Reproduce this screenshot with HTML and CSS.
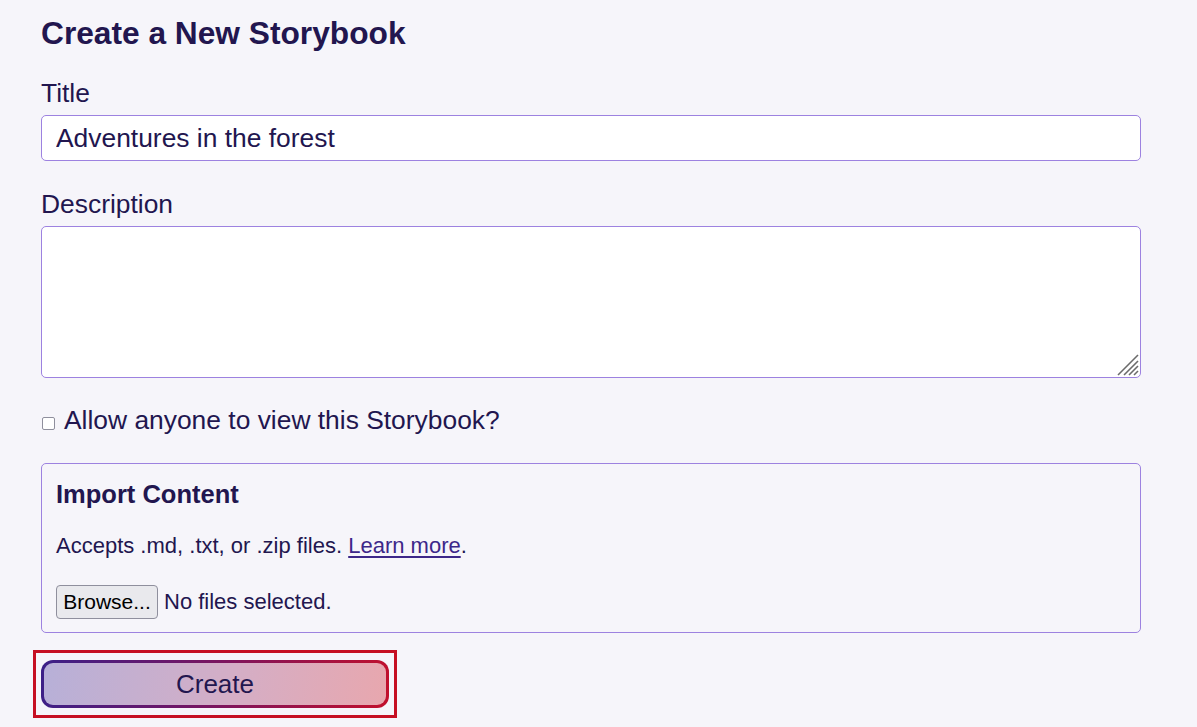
FILE: index.html
```html
<!DOCTYPE html>
<html lang="en">
<head>
<meta charset="utf-8">
<title>Create a New Storybook</title>
<link rel="stylesheet" href="styles.css">
</head>
<body>
<main class="page">
  <h2 class="page-title">Create a New Storybook</h2>
  <form class="form">
    <label class="field-label" for="title">Title</label>
    <input class="text-input" id="title" type="text" value="Adventures in the forest">

    <label class="field-label" for="desc">Description</label>
    <div class="area-wrap">
      <textarea class="text-area" id="desc"></textarea>
      <svg class="grip" width="22" height="22" viewBox="0 0 22 22" aria-hidden="true">
        <g stroke="#6b6b6b" stroke-width="1.6" stroke-linecap="butt">
          <line x1="1" y1="21" x2="21" y2="1"/>
          <line x1="7" y1="21" x2="21" y2="7"/>
          <line x1="12" y1="21" x2="21" y2="12"/>
          <line x1="17" y1="21" x2="21" y2="17"/>
        </g>
      </svg>
    </div>

    <label class="check-row"><input class="check" type="checkbox"><span>Allow anyone to view this Storybook?</span></label>

    <fieldset class="import">
      <h3 class="import-title">Import Content</h3>
      <p class="import-note">Accepts .md, .txt, or .zip files. <a class="link" href="#">Learn more</a>.</p>
      <div class="file-row">
        <button class="browse-btn" type="button">Browse...</button>
        <span class="file-status">No files selected.</span>
      </div>
    </fieldset>

    <div class="actions">
      <div class="focus-ring">
        <button class="create-btn" type="submit">Create</button>
      </div>
    </div>
  </form>
</main>
</body>
</html>
```

FILE: styles.css
```css
html, body {
  margin: 0;
  padding: 0;
  background: #f6f5fa;
}

body {
  font-family: "Liberation Sans", Arial, sans-serif;
  color: #22164f;
}

.page {
  width: 1100px;
  padding: 15px 0 0 41px;
}

.page-title {
  margin: 0 0 26px;
  font-size: 31.7px;
  font-weight: 700;
  line-height: normal;
}

.form {
  display: flex;
  flex-direction: column;
  align-items: stretch;
}

.field-label {
  font-size: 26.4px;
  line-height: normal;
  margin-bottom: 6px;
}

.text-input {
  box-sizing: border-box;
  height: 46px;
  margin: 0 0 28px;
  padding: 0 14px;
  border: 1px solid #9d82e0;
  border-radius: 5px;
  background: #ffffff;
  font-family: inherit;
  font-size: 26.4px;
  color: #22164f;
  outline: none;
}

.area-wrap {
  position: relative;
  margin: 0 0 27px;
}

.text-area {
  display: block;
  box-sizing: border-box;
  width: 100%;
  height: 152px;
  margin: 0;
  padding: 8px 14px;
  border: 1px solid #9d82e0;
  border-radius: 5px;
  background: #ffffff;
  font-family: inherit;
  font-size: 26.4px;
  color: #22164f;
  resize: none;
  outline: none;
}

.grip {
  position: absolute;
  right: 2px;
  bottom: 2px;
  pointer-events: none;
}

.check-row {
  display: flex;
  align-items: center;
  gap: 9px;
  font-size: 26.4px;
  line-height: normal;
  margin-bottom: 27px;
}

.check {
  appearance: none;
  -webkit-appearance: none;
  box-sizing: border-box;
  width: 13px;
  height: 13px;
  margin: 6px 0 0 1px;
  border: 1px solid #8f8f9d;
  border-radius: 2px;
  background: #ffffff;
  flex: none;
}

.import {
  margin: 0 0 17px;
  padding: 16px 14px 13px;
  border: 1px solid #9d82e0;
  border-radius: 5px;
  min-width: 0;
}

.import-title {
  margin: 0 0 24px;
  font-size: 25.5px;
  font-weight: 700;
  line-height: normal;
}

.import-note {
  margin: 0 0 26px;
  font-size: 22px;
  line-height: normal;
}

.link {
  color: #3d2789;
  text-decoration: underline;
  text-underline-offset: 3px;
}

.file-row {
  display: flex;
  align-items: center;
  gap: 6px;
}

.browse-btn {
  box-sizing: border-box;
  height: 34px;
  width: 102px;
  padding: 0;
  border: 1px solid #8f8f9d;
  border-radius: 4px;
  background: #e9e9ed;
  font-family: inherit;
  font-size: 21px;
  color: #000000;
}

.file-status {
  font-size: 22px;
}

.actions {
  display: flex;
  margin-left: -8px;
}

.focus-ring {
  display: flex;
  padding: 7px 5px 7px;
  border: 3px solid #c60f23;
}

.create-btn {
  box-sizing: border-box;
  width: 348px;
  height: 48px;
  border: 3px solid transparent;
  border-radius: 12px;
  background:
    linear-gradient(100deg, #b7b0d8 0%, #d4aec6 55%, #e8a7ae 100%) padding-box,
    linear-gradient(100deg, #3b2088 0%, #7a1560 50%, #c2102c 100%) border-box;
  font-family: inherit;
  font-size: 26px;
  color: #22164f;
  outline: none;
  cursor: pointer;
}
```
